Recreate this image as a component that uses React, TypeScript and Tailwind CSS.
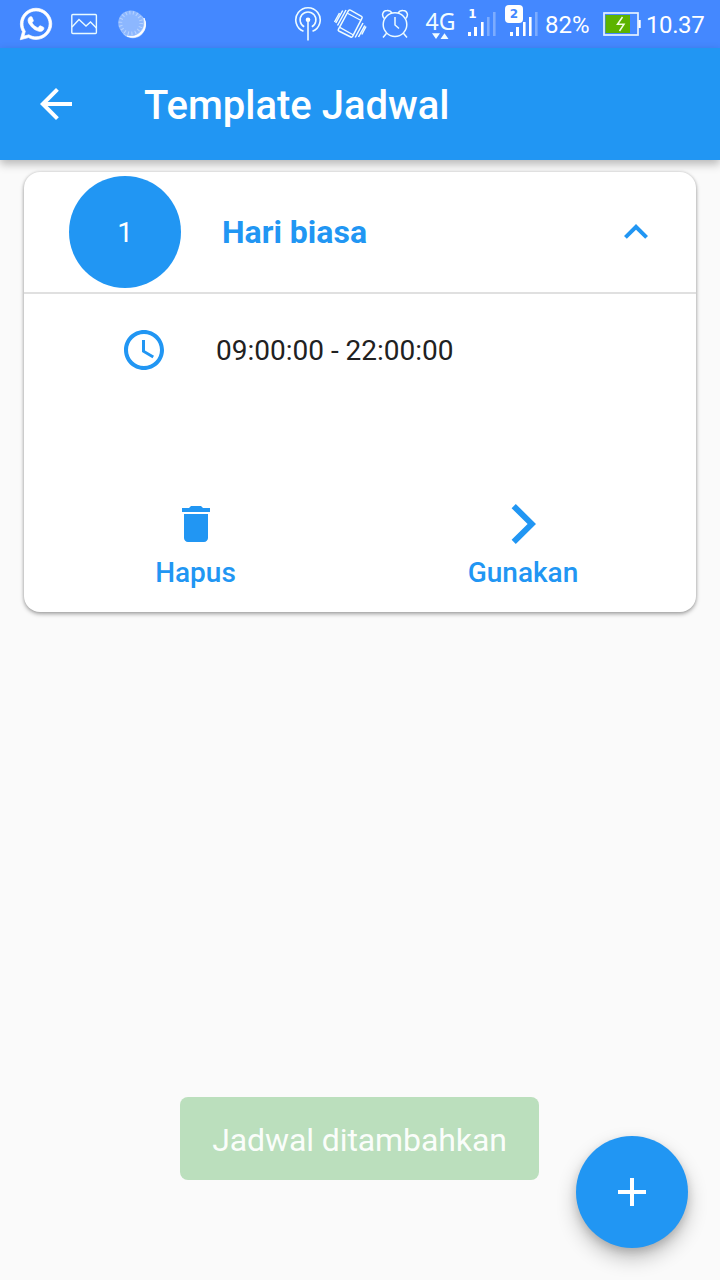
import React from "react";
import { FaWhatsapp } from "react-icons/fa";
import { MdAccessTime, MdAdd, MdArrowBack, MdDelete, MdExpandLess } from "react-icons/md";

function PictureIcon() {
  return (
    <svg className="ml-[16px] h-12 w-[28px]" viewBox="70 0 28 48" fill="none" stroke="#e9fbff" strokeWidth="1.4">
      <rect x="71.8" y="14.5" width="24.6" height="19" rx="1" />
      <path d="M72 27 L79 19.5 L86 26 L90.5 22 L96.4 28" />
    </svg>
  );
}

function SpinnerIcon() {
  return (
    <svg className="ml-[18px] h-12 w-[32px]" viewBox="116 0 32 48" fill="none">
      <circle cx="132.8" cy="25.2" r="13" fill="#a9cbff" />
      <path d="M144 18 A13 13 0 0 1 127 36 A14 14 0 0 0 144 18Z" fill="#ffffff" stroke="#ffffff" strokeWidth="0.8" />
      <circle cx="130.8" cy="23" r="12.6" fill="#8cb7ff" />
      <circle cx="130.8" cy="23" r="10.4" stroke="#b4d1ff" strokeWidth="3.6" strokeDasharray="1.1 2.53" />
    </svg>
  );
}

function HotspotIcon() {
  return (
    <svg className="h-12 w-[28px]" viewBox="294 0 28 48" fill="none" stroke="#eefcff" strokeWidth="1.6">
      <path d="M303.5 31.3 A12.2 12.2 0 1 1 312.5 31.3" />
      <path d="M304.2 26.8 A7.9 7.9 0 1 1 311.8 26.8" />
      <circle cx="308" cy="19.8" r="2.3" fill="#ffffff" stroke="none" />
      <path d="M308 20 V40.5" />
    </svg>
  );
}

function VibrateIcon() {
  return (
    <svg className="ml-[11px] h-12 w-[35px]" viewBox="333 0 35 48" fill="none" stroke="#eefcff" strokeWidth="1.5">
      <path d="M348.5 10.6 Q349.3 9.6 350.4 10.2 L361.5 16.4 Q362.6 17 362 18.1 L352.6 36.3 Q352 37.6 350.8 37 L338.8 31 Q337.8 30.4 338.4 29.3Z" />
      <path d="M347.4 13.2 L361.2 20.5 M339.8 27.4 L353 34.8" strokeWidth="1.3" />
      <path d="M346 10 L337.5 25.5 M342.7 10.5 L335.8 23 M339.5 13 L334.5 22 M355.2 37.5 L363 23 M358.5 37 L364.8 25.5 M361.8 34.5 L366 26.5" />
    </svg>
  );
}

function AlarmIcon() {
  return (
    <svg className="ml-[13px] h-12 w-[28px]" viewBox="381 0 28 48" fill="none" stroke="#eefcff" strokeWidth="1.5">
      <circle cx="395" cy="24.6" r="11.8" />
      <path d="M395 17 V25 L399 28.5" />
      <path d="M384.2 18.4 C381 15 383 10.5 387 10.5 C389.4 10.4 391 11.3 391.9 13.2 M405.8 18.4 C409 15 407 10.5 403 10.5 C400.6 10.4 399 11.3 398.1 13.2" />
      <path d="M386.6 33.3 L383 37.5 M403.4 33.3 L407 37.5" />
    </svg>
  );
}

function NetworkType() {
  return (
    <svg className="ml-[15px] h-12 w-[33px]" viewBox="424 0 33 48" fill="#f2fdff">
      <text x="425.5" y="30" fontSize="23" textLength="30" lengthAdjust="spacingAndGlyphs" className="font-['Noto_Sans',sans-serif]">
        4G
      </text>
      <path d="M432 33.3 H440 L436 39Z M440.5 39 H448.5 L444.5 33.3Z" />
    </svg>
  );
}

function SignalOne() {
  return (
    <svg className="ml-[10px] h-12 w-[30px]" viewBox="467 0 30 48" fill="#ffffff">
      <text x="468.2" y="18" fontSize="12" fontWeight="700" className="font-['DejaVu_Sans',sans-serif]">
        1
      </text>
      <path d="M468 32 h3 v4 h-3Z M474 27 h3 v9 h-3Z M481 22 h2.6 v14 h-2.6Z" />
      <path d="M487 17 h2.6 v19 h-2.6Z M493 12 h2.6 v24 h-2.6Z" opacity="0.3" />
    </svg>
  );
}

function SignalTwo() {
  return (
    <svg className="ml-[7px] h-12 w-[36px]" viewBox="504 0 36 48" fill="#ffffff">
      <rect x="505" y="5" width="18" height="18" rx="4" />
      <text x="509.8" y="18" fontSize="12" fontWeight="700" fill="#4488ff" className="font-['DejaVu_Sans',sans-serif]">
        2
      </text>
      <path d="M510 32 h3 v4 h-3Z M516 27 h3 v9 h-3Z M523 22 h2.6 v14 h-2.6Z M529 17 h2.6 v19 h-2.6Z" />
      <path d="M535 12 h2.6 v24 h-2.6Z" opacity="0.3" />
    </svg>
  );
}

function BatteryIcon() {
  return (
    <svg className="h-12 w-[39px]" viewBox="602 0 39 48" fill="none">
      <rect x="604" y="13" width="34" height="22" stroke="#e5f3ff" strokeWidth="1.7" />
      <rect x="605.5" y="15" width="24.5" height="18" fill="#5cb300" />
      <path d="M638.5 20 h2.2 v8 h-2.2Z" fill="#ffffff" />
      <path d="M622.5 17 L617.5 24.2 H624 L619.5 31" stroke="#f2ffe5" strokeWidth="1.5" />
    </svg>
  );
}

function ChevronRight() {
  return (
    <svg className="size-12" viewBox="0 0 48 48" fill="currentColor">
      <path d="M15.8 4 L36 24 L15.8 44 L11.6 39.8 L27.6 24 L11.6 8.2Z" />
    </svg>
  );
}

function StatusBar() {
  return (
    <div className="flex h-12 shrink-0 items-center bg-[#4488ff] text-white">
      <FaWhatsapp className="ml-[18px] size-[36px]" stroke="currentColor" strokeWidth={10} />
      <PictureIcon />
      <SpinnerIcon />
      <div className="ml-auto flex items-center pr-[15px]">
        <HotspotIcon />
        <VibrateIcon />
        <AlarmIcon />
        <NetworkType />
        <SignalOne />
        <SignalTwo />
        <span className="ml-[5px] w-[57px] pt-px text-[24px] leading-[48px] whitespace-nowrap">82%</span>
        <BatteryIcon />
        <span className="ml-[5px] w-[59px] pt-px text-[24px] leading-[48px] tracking-[-0.4px] whitespace-nowrap">10.37</span>
      </div>
    </div>
  );
}

function ScheduleCard() {
  return (
    <section className="mx-6 mt-3 flex h-[440px] flex-col rounded-2xl bg-white shadow-[0_2px_4px_rgba(0,0,0,0.34),0_0_3px_rgba(0,0,0,0.14)]">
      <div className="flex h-[122px] items-center border-b-2 border-[#e0e0e0] pr-9 pl-[45px]">
        <div className="flex size-28 items-center justify-center rounded-full bg-[#2196f3] pt-[2px] text-[28px] text-white">1</div>
        <h2 className="ml-[41px] text-[32px] font-bold">Hari biasa</h2>
        <MdExpandLess className="ml-auto size-12" />
      </div>
      <div className="flex h-28 items-center pl-24">
        <MdAccessTime className="size-12" />
        <span className="ml-12 pt-[2px] text-[28px] text-[#212121]">09:00:00 - 22:00:00</span>
      </div>
      <div className="mt-auto flex h-[136px] pl-[7px] text-[28px] font-medium">
        <button className="flex w-[330px] flex-col items-center pt-6">
          <MdDelete className="size-12" />
          <span className="mt-1 pr-px leading-[42px]">Hapus</span>
        </button>
        <button className="flex w-[326px] flex-col items-center pt-6">
          <ChevronRight />
          <span className="mt-1 pr-[2px] leading-[42px]">Gunakan</span>
        </button>
      </div>
    </section>
  );
}

export default function App() {
  return (
    <div className="relative flex h-[1280px] w-[720px] flex-col overflow-hidden bg-[#fafafa] font-[Roboto,sans-serif] text-[#2196f3]">
      <StatusBar />
      <header className="flex h-28 shrink-0 items-center bg-[#2196f3] pl-8 text-white shadow-[0_4px_9px_rgba(0,0,0,0.28)]">
        <MdArrowBack className="size-12" />
        <h1 className="ml-16 pt-[3px] text-[40px] font-medium">Template Jadwal</h1>
      </header>
      <ScheduleCard />
      <div className="absolute top-[1097px] left-[180px] flex h-[83px] w-[359px] items-center justify-center rounded-lg bg-[#bbdfbd] pt-[2px] text-[32px] tracking-[-0.1px] text-white/95">
        Jadwal ditambahkan
      </div>
      <button className="absolute right-8 bottom-8 flex size-28 items-center justify-center rounded-full bg-[#2196f3] text-white shadow-[0_10px_20px_rgba(0,0,0,0.24),0_4px_8px_rgba(0,0,0,0.14)]">
        <MdAdd className="size-12" />
      </button>
    </div>
  );
}
